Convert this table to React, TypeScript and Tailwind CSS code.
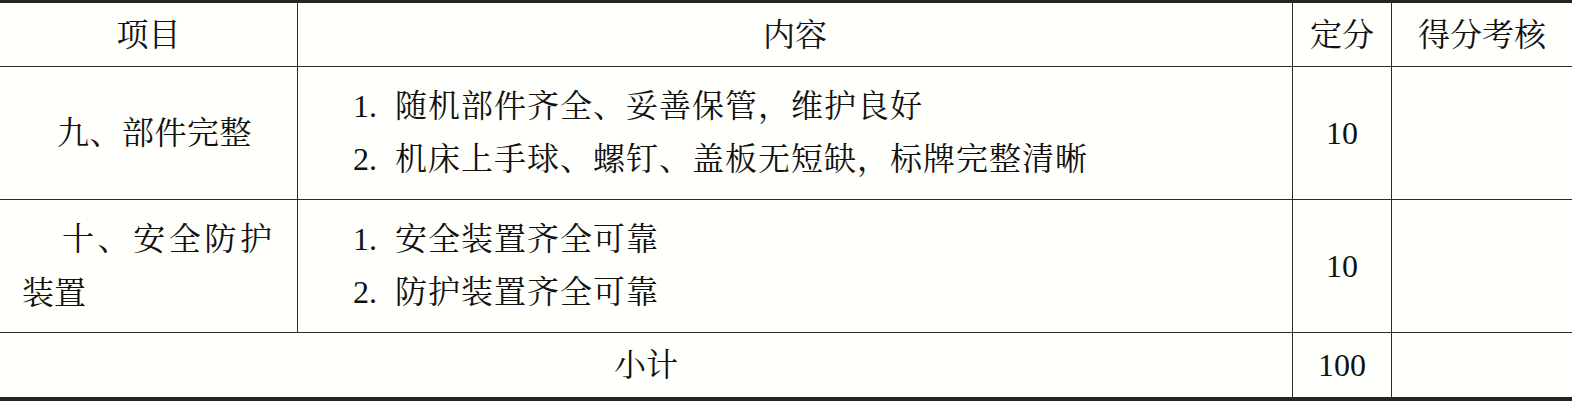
import React from 'react';

const font = { fontFamily: '"Liberation Serif", "Noto Serif CJK SC", "Noto Sans CJK SC", serif' };

function Num({ n }: { n: string }) {
  return <span className="inline-block w-[42px] tracking-normal">{n}</span>;
}

export default function App() {
  const line = 'border-[#2c2c22]';
  return (
    <div className="w-[1572px] h-[401px] bg-[#fffffb] text-[#111] text-[32px] leading-none" style={font}>
      <div
        className={`grid grid-cols-[298px_995px_99px_1fr] grid-rows-[64px_133px_133px_64px] border-t-[3px] border-b-[4px] border-[#23261a]`}
      >
        {/* header */}
        <div className={`flex items-center justify-center border-r-[1.5px] border-b-[1.5px] ${line}`}>项目</div>
        <div className={`flex items-center justify-center border-r-[1.5px] border-b-[1.5px] ${line}`}>内容</div>
        <div className={`flex items-center justify-center border-r-[1.5px] border-b-[1.5px] ${line}`}>定分</div>
        <div className={`flex items-center justify-center border-b-[1.5px] ${line}`}>得分考核</div>

        {/* row 1 */}
        <div className={`flex items-center pl-[22px] pr-[25px] border-r-[1.5px] border-b-[1.5px] ${line}`}>
          <p className="w-full text-justify indent-[35px] leading-[53px] tracking-[0.5px]">九、部件完整</p>
        </div>
        <div className={`flex flex-col justify-center pl-[55px] border-r-[1.5px] border-b-[1.5px] ${line} leading-[53px] tracking-[1px]`}>
          <p><Num n="1." />随机部件齐全、妥善保管，维护良好</p>
          <p><Num n="2." />机床上手球、螺钉、盖板无短缺，标牌完整清晰</p>
        </div>
        <div className={`flex items-center justify-center border-r-[1.5px] border-b-[1.5px] ${line}`}>10</div>
        <div className={`border-b-[1.5px] ${line}`}></div>

        {/* row 2 */}
        <div className={`flex items-center pl-[22px] pr-[25px] border-r-[1.5px] border-b-[1.5px] ${line}`}>
          <p className="w-full text-justify indent-[40px] leading-[54px]">十、安全防护装置</p>
        </div>
        <div className={`flex flex-col justify-center pl-[55px] border-r-[1.5px] border-b-[1.5px] ${line} leading-[53px] tracking-[1px]`}>
          <p><Num n="1." />安全装置齐全可靠</p>
          <p><Num n="2." />防护装置齐全可靠</p>
        </div>
        <div className={`flex items-center justify-center border-r-[1.5px] border-b-[1.5px] ${line}`}>10</div>
        <div className={`border-b-[1.5px] ${line}`}></div>

        {/* total */}
        <div className={`col-span-2 flex items-center justify-center border-r-[1.5px] ${line}`}>小计</div>
        <div className={`flex items-center justify-center border-r-[1.5px] ${line}`}>100</div>
        <div></div>
      </div>
    </div>
  );
}
